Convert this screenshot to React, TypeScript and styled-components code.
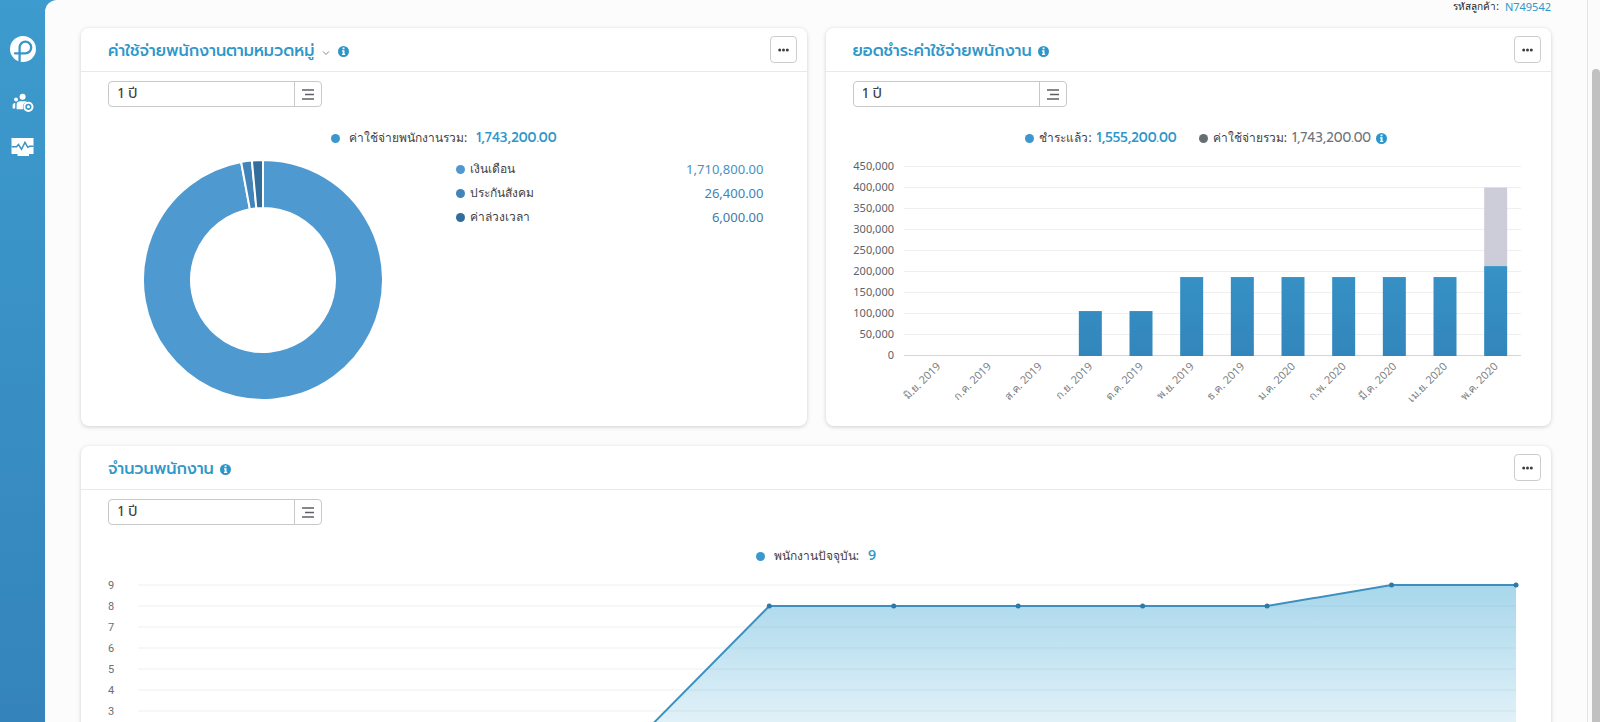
import React, { useLayoutEffect, useRef, useState } from "react";
import styled, { createGlobalStyle } from "styled-components";

const titleFont = '"Prompt", "Noto Sans Thai", "Noto Sans", sans-serif';
const thaiFont = '"Noto Sans", sans-serif';
const blue = "#2f97c9";

const GlobalStyle = createGlobalStyle`
  *, *::before, *::after { box-sizing: border-box; }
  body { margin: 0; font-family: ${thaiFont}; color: #3f4245; }
  button, select { font: inherit; color: inherit; }
`;

const Shell = styled.div`
  display: grid;
  grid-template-columns: 45px minmax(0, 1fr) 13px;
  height: 100vh;
  overflow: hidden;
  background: linear-gradient(#3d9bcd, #3484bb);
`;

const Sidebar = styled.nav`
  display: flex;
  flex-direction: column;
  align-items: center;
  padding-top: 36px;
  gap: 18px;
`;

const SideLink = styled.a<{ $brand?: boolean }>`
  display: grid;
  place-items: center;
  width: 26px;
  height: 26px;
  margin-bottom: ${(p) => (p.$brand ? "10px" : "0")};
`;

const Page = styled.main`
  min-height: 0;
  padding: 0 36px;
  overflow: hidden auto;
  scrollbar-width: none;
  background: #fcfcfc;
  border-radius: 12px 0 0 0;
`;

const ScrollTrack = styled.div`
  padding: 69px 0 0 4px;
  background: #fbfbfb;
  border-left: 1px solid #e4e4e4;
`;

const ScrollThumb = styled.div`
  height: 100%;
  background: #c1c1c1;
  border-radius: 5px 5px 0 0;
`;

const CustomerLine = styled.p`
  display: flex;
  justify-content: flex-end;
  gap: 6px;
  height: 28px;
  margin: 0;
  font-size: 10px;
  line-height: 13px;
  color: #222;
`;

const CustomerCode = styled.strong`
  font-size: 11px;
  font-weight: 400;
  color: ${blue};
`;

const Grid = styled.div`
  display: grid;
  grid-template-columns: repeat(2, minmax(0, 1fr));
  gap: 20px 19px;
  padding-bottom: 20px;
`;

const CardBox = styled.section<{ $wide?: boolean }>`
  grid-column: ${(p) => (p.$wide ? "1 / -1" : "auto")};
  min-height: 398px;
  background: #fff;
  border-radius: 8px;
  box-shadow: 0 1px 4px rgba(0, 0, 0, 0.18);
`;

const CardHeader = styled.header`
  display: flex;
  align-items: center;
  justify-content: space-between;
  height: 44px;
  padding: 0 10px 0 27px;
  border-bottom: 1px solid #e9e9e9;
`;

const TitleGroup = styled.div`
  display: flex;
  align-items: center;
  gap: 6px;
  padding-top: 3px;
`;

const Title = styled.h2`
  margin: 0;
  font: 500 16px/24px ${titleFont};
  color: ${blue};
`;

const PlainButton = styled.button`
  display: grid;
  place-items: center;
  width: 12px;
  height: 20px;
  padding: 4px 0 0;
  border: 0;
  background: none;
`;

const MoreButton = styled.button`
  display: grid;
  place-items: center;
  width: 27px;
  height: 27px;
  padding: 0;
  border: 1px solid #ccc;
  border-radius: 4px;
  background: #fff;
`;

const CardBody = styled.div`
  padding: 9px 27px 0;
`;

const Period = styled.label`
  display: grid;
  grid-template-columns: minmax(0, 1fr) 27px;
  width: 214px;
  height: 26px;
  border: 1px solid #c9c9c9;
  border-radius: 4px;
  background: #fff;
`;

const PeriodSelect = styled.select`
  grid-area: 1 / 1 / 2 / 3;
  appearance: none;
  width: 100%;
  padding: 0 9px;
  border: 0;
  background: none;
  font: 400 14px/24px ${titleFont};
`;

const PeriodIcon = styled.span`
  grid-area: 1 / 2 / 2 / 3;
  display: grid;
  place-items: center;
  border-left: 1px solid #c9c9c9;
  pointer-events: none;
`;

const Legend = styled.div<{ $indent?: number }>`
  display: flex;
  align-items: center;
  justify-content: center;
  gap: 22px;
  height: 22px;
  margin-top: 20px;
  padding-left: ${(p) => p.$indent ?? 0}px;
  font-size: 12px;
  line-height: 22px;
`;

const LegendItem = styled.span<{ $gap: number }>`
  display: flex;
  align-items: center;
  gap: ${(p) => p.$gap}px;
`;

const Dot = styled.i<{ $color: string }>`
  flex: none;
  width: 9px;
  height: 9px;
  border-radius: 50%;
  background: ${(p) => p.$color};
`;

const LegendValue = styled.b<{ $muted?: boolean }>`
  font: 500 13px/22px ${titleFont};
  font-weight: ${(p) => (p.$muted ? 400 : 500)};
  color: ${(p) => (p.$muted ? "#6d7278" : blue)};
`;

const Split = styled.div`
  display: grid;
  grid-template-columns: 310px minmax(0, 1fr);
  align-items: start;
  padding-right: 16px;
`;

const DonutWrap = styled.div`
  display: grid;
  place-items: center;
  padding-top: 11px;
`;

const List = styled.dl`
  margin: 8px 0 0 38px;
`;

const ListRow = styled.div`
  display: flex;
  align-items: center;
  gap: 5px;
  height: 24px;
`;

const ListName = styled.dt`
  flex: 1;
  font-size: 12px;
  line-height: 24px;
`;

const ListValue = styled.dd<{ $color: string }>`
  margin: 0;
  font-size: 13px;
  line-height: 24px;
  color: ${(p) => p.$color};
`;

const ChartHost = styled.div<{ $top: number }>`
  margin-top: ${(p) => p.$top}px;
  svg {
    display: block;
    overflow: visible;
  }
`;

function useWidth(initial: number) {
  const ref = useRef<HTMLDivElement>(null);
  const [width, setWidth] = useState(initial);
  useLayoutEffect(() => {
    const el = ref.current;
    if (!el) return;
    const read = () => setWidth(el.clientWidth);
    read();
    const observer = new ResizeObserver(read);
    observer.observe(el);
    return () => observer.disconnect();
  }, []);
  return [ref, width] as const;
}

const InfoIcon = () => (
  <svg width="11" height="11" viewBox="0 0 11 11" role="img" aria-label="info">
    <circle cx="5.5" cy="5.5" r="5.5" fill="#2a96cb" />
    <path d="M4.6 1.6h1.9v1.6H4.6zM4 4.3h2.5v3.4h.7v1.2H4V7.7h.7V5.4H4z" fill="#fff" />
  </svg>
);

const MoreIcon = () => (
  <svg width="11" height="4" viewBox="0 0 11 4" fill="#3c3f42" aria-hidden>
    <circle cx="1.7" cy="2" r="1.5" />
    <circle cx="5.5" cy="2" r="1.5" />
    <circle cx="9.3" cy="2" r="1.5" />
  </svg>
);

const LinesIcon = () => (
  <svg width="12" height="11" viewBox="0 0 12 11" stroke="#5c6065" strokeWidth="1.7" aria-hidden>
    <path d="M0 1h12M3 5.500h9M0 10h12" />
  </svg>
);

const Logo = () => (
  <svg width="26" height="26" viewBox="0 0 26 26" fill="none" aria-hidden>
    <circle cx="13" cy="13" r="13" fill="#fff" />
    <path
      d="M5 17.300h10.400a5.800 5.800 0 1 0-5.800-5.800V25"
      stroke="#3a95c8"
      strokeWidth="2.300"
      strokeLinecap="round"
    />
  </svg>
);

const PeopleIcon = () => (
  <svg width="22" height="20" viewBox="0 0 22 20" fill="#fff" aria-hidden>
    <circle cx="4" cy="6.500" r="1.900" />
    <circle cx="10.600" cy="3.800" r="3" />
    <path d="M.6 15.500v-3.200c0-1.500.9-2.400 2.600-2.400v5.600zM4.600 16.200v-4.600c0-2.200 1.400-3.300 3.600-3.300h4.600c1 0 1.700.2 2.300.6-2.600.6-4.300 2.500-4.300 5 0 .9.200 1.600.5 2.300z" />
    <circle cx="16.400" cy="13.800" r="4.100" fill="none" stroke="#fff" strokeWidth="2" />
    <circle cx="16.400" cy="13.800" r="1.500" />
  </svg>
);

const MonitorIcon = () => (
  <svg width="23" height="20" viewBox="0 0 23 20" fill="none" aria-hidden>
    <path d="M.5 1h22v16h-4.500v2H6.500v-2h-6z" fill="#fff" />
    <path d="M.5 9.800h5l2-2.300 3 4.800 3.500-7 2.800 5 1.700-1h4" stroke="#3a93c6" strokeWidth="1.500" />
  </svg>
);

const slices = [
  { name: "เงินเดือน", value: "1,710,800.00", color: "#4f99d1", ink: "#4a90c4", from: 0, to: 349.5 },
  { name: "ประกันสังคม", value: "26,400.00", color: "#4084b9", ink: "#4084b9", from: 349.5, to: 354.7 },
  { name: "ค่าล่วงเวลา", value: "6,000.00", color: "#336d9c", ink: "#3f7ba8", from: 354.7, to: 360 },
];

function arc(from: number, to: number, outer: number, inner: number) {
  const at = (deg: number, r: number) => {
    const a = ((deg - 90) * Math.PI) / 180;
    return `${120 + r * Math.cos(a)} ${120 + r * Math.sin(a)}`;
  };
  const large = to - from > 180 ? 1 : 0;
  return `M${at(from, outer)}A${outer} ${outer} 0 ${large} 1 ${at(to, outer)}L${at(to, inner)}A${inner} ${inner} 0 ${large} 0 ${at(from, inner)}Z`;
}

const Donut = () => (
  <svg width="240" height="240" viewBox="0 0 240 240" role="img" aria-label="ค่าใช้จ่ายพนักงานตามหมวดหมู่">
    {slices.map((s) => (
      <path key={s.name} d={arc(s.from, s.to, 120, 72)} fill={s.color} stroke="#fff" strokeWidth="2" />
    ))}
  </svg>
);

const months = [
  { label: "มิ.ย. 2019", paid: 0, due: 0 },
  { label: "ก.ค. 2019", paid: 0, due: 0 },
  { label: "ส.ค. 2019", paid: 0, due: 0 },
  { label: "ก.ย. 2019", paid: 107000, due: 0 },
  { label: "ต.ค. 2019", paid: 107000, due: 0 },
  { label: "พ.ย. 2019", paid: 188000, due: 0 },
  { label: "ธ.ค. 2019", paid: 188000, due: 0 },
  { label: "ม.ค. 2020", paid: 188000, due: 0 },
  { label: "ก.พ. 2020", paid: 188000, due: 0 },
  { label: "มี.ค. 2020", paid: 188000, due: 0 },
  { label: "เม.ย. 2020", paid: 188000, due: 0 },
  { label: "พ.ค. 2020", paid: 214000, due: 187000 },
];

const PaymentsChart = () => {
  const [ref, width] = useWidth(671);
  const left = 60;
  const right = width - 4;
  const step = (right - left) / months.length;
  const base = 198;
  const y = (v: number) => base - (v / 50000) * 21;
  return (
    <ChartHost ref={ref} $top={9}>
      <svg width={width} height="250" role="img" aria-label="ยอดชำระค่าใช้จ่ายพนักงาน">
        <defs>
          <linearGradient id="paid" gradientUnits="userSpaceOnUse" x1="0" y1="100" x2="0" y2={base}>
            <stop offset="0" stopColor="#3793c7" />
            <stop offset="1" stopColor="#3286bb" />
          </linearGradient>
        </defs>
        {Array.from({ length: 10 }, (_, i) => (
          <g key={i}>
            <path d={`M${left - 9} ${base - i * 21 - 0.5}H${right}`} stroke={i ? "#efefef" : "#d6d6d6"} />
            <text x="41" y={base - i * 21 + 3} textAnchor="end" fontSize="11" fill="#5d6268">
              {(i * 50000).toLocaleString("en-US")}
            </text>
          </g>
        ))}
        {months.map((m, i) => {
          const center = left + (i + 0.5) * step;
          return (
            <g key={m.label}>
              <rect x={center - 11.5} y={y(m.paid + m.due)} width="23" height={base - y(m.due)} fill="#cccdd9" />
              <rect x={center - 11.5} y={y(m.paid)} width="23" height={base - y(m.paid)} fill="url(#paid)" />
              <text
                transform={`translate(${center + 3} ${base + 11}) rotate(-45)`}
                textAnchor="end"
                fontSize="11"
                fill="#7b7f85"
              >
                {m.label}
              </text>
            </g>
          );
        })}
      </svg>
    </ChartHost>
  );
};

const headcount = [0, 0, 0, 0, 2, 8, 8, 8, 8, 8, 9, 9];

const HeadcountChart = () => {
  const [ref, width] = useWidth(1416);
  const left = 39;
  const right = width - 8;
  const top = 17;
  const base = top + 9 * 21;
  const x = (i: number) => left + (i * (right - left)) / (headcount.length - 1);
  const points = headcount.map((v, i) => `${x(i)} ${base - v * 21}`);
  return (
    <ChartHost ref={ref} $top={1}>
      <svg width={width} height="260" role="img" aria-label="จำนวนพนักงาน">
        <defs>
          <linearGradient id="people" gradientUnits="userSpaceOnUse" x1="0" y1={top} x2="0" y2={base}>
            <stop offset="0" stopColor="#2f9fd0" stopOpacity="0.42" />
            <stop offset="1" stopColor="#2f9fd0" stopOpacity="0.04" />
          </linearGradient>
        </defs>
        {Array.from({ length: 10 }, (_, i) => (
          <g key={i}>
            <path d={`M${left - 9} ${base - i * 21}H${right}`} stroke="#efefef" />
            <text x="0" y={base - i * 21 + 4} fontSize="11" fill="#6a6e73" fontFamily="Roboto, sans-serif">
              {i}
            </text>
          </g>
        ))}
        <path d={`M${points.join("L")}L${right} ${base}H${left}Z`} fill="url(#people)" />
        <path d={`M${points.join("L")}`} fill="none" stroke="#3d8fbe" strokeWidth="2" />
        {headcount.map((v, i) => (
          <circle key={i} cx={x(i)} cy={base - v * 21} r="2.5" fill="#2b7ba8" />
        ))}
      </svg>
    </ChartHost>
  );
};

type CardProps = { title: string; menu?: boolean; wide?: boolean; children: React.ReactNode };

const Card = ({ title, menu, wide, children }: CardProps) => (
  <CardBox $wide={wide}>
    <CardHeader>
      <TitleGroup>
        <Title>{title}</Title>
        {menu && (
          <PlainButton type="button" aria-label="เลือกหมวดหมู่">
            <svg width="8" height="6" viewBox="0 0 8 6" fill="none" stroke="#7f8b92" aria-hidden>
              <path d="M1 1.500l3 3 3-3" />
            </svg>
          </PlainButton>
        )}
        <InfoIcon />
      </TitleGroup>
      <MoreButton type="button" aria-label="เพิ่มเติม">
        <MoreIcon />
      </MoreButton>
    </CardHeader>
    <CardBody>
      <Period>
        <PeriodSelect aria-label="ช่วงเวลา" defaultValue="1">
          <option value="1">1 ปี</option>
        </PeriodSelect>
        <PeriodIcon>
          <LinesIcon />
        </PeriodIcon>
      </Period>
      {children}
    </CardBody>
  </CardBox>
);

export default function App() {
  return (
    <>
      <GlobalStyle />
      <Shell>
        <Sidebar>
          <SideLink href="#home" aria-label="หน้าหลัก" $brand>
            <Logo />
          </SideLink>
          <SideLink href="#people" aria-label="พนักงาน">
            <PeopleIcon />
          </SideLink>
          <SideLink href="#dashboard" aria-label="แดชบอร์ด">
            <MonitorIcon />
          </SideLink>
        </Sidebar>
        <Page>
          <CustomerLine>
            รหัสลูกค้า: <CustomerCode>N749542</CustomerCode>
          </CustomerLine>
          <Grid>
            <Card title="ค่าใช้จ่ายพนักงานตามหมวดหมู่" menu>
              <Legend>
                <LegendItem $gap={9}>
                  <Dot $color="#3b97cd" />
                  ค่าใช้จ่ายพนักงานรวม:
                  <LegendValue>1,743,200.00</LegendValue>
                </LegendItem>
              </Legend>
              <Split>
                <DonutWrap>
                  <Donut />
                </DonutWrap>
                <List>
                  {slices.map((s) => (
                    <ListRow key={s.name}>
                      <Dot $color={s.color} />
                      <ListName>{s.name}</ListName>
                      <ListValue $color={s.ink}>{s.value}</ListValue>
                    </ListRow>
                  ))}
                </List>
              </Split>
            </Card>
            <Card title="ยอดชำระค่าใช้จ่ายพนักงาน">
              <Legend $indent={36}>
                <LegendItem $gap={5}>
                  <Dot $color="#3b97cd" />
                  ชำระแล้ว:
                  <LegendValue>1,555,200.00</LegendValue>
                </LegendItem>
                <LegendItem $gap={5}>
                  <Dot $color="#686d74" />
                  ค่าใช้จ่ายรวม:
                  <LegendValue $muted>1,743,200.00</LegendValue>
                  <InfoIcon />
                </LegendItem>
              </Legend>
              <PaymentsChart />
            </Card>
            <Card title="จำนวนพนักงาน" wide>
              <Legend>
                <LegendItem $gap={9}>
                  <Dot $color="#3b97cd" />
                  พนักงานปัจจุบัน:
                  <LegendValue>9</LegendValue>
                </LegendItem>
              </Legend>
              <HeadcountChart />
            </Card>
          </Grid>
        </Page>
        <ScrollTrack aria-hidden>
          <ScrollThumb />
        </ScrollTrack>
      </Shell>
    </>
  );
}
